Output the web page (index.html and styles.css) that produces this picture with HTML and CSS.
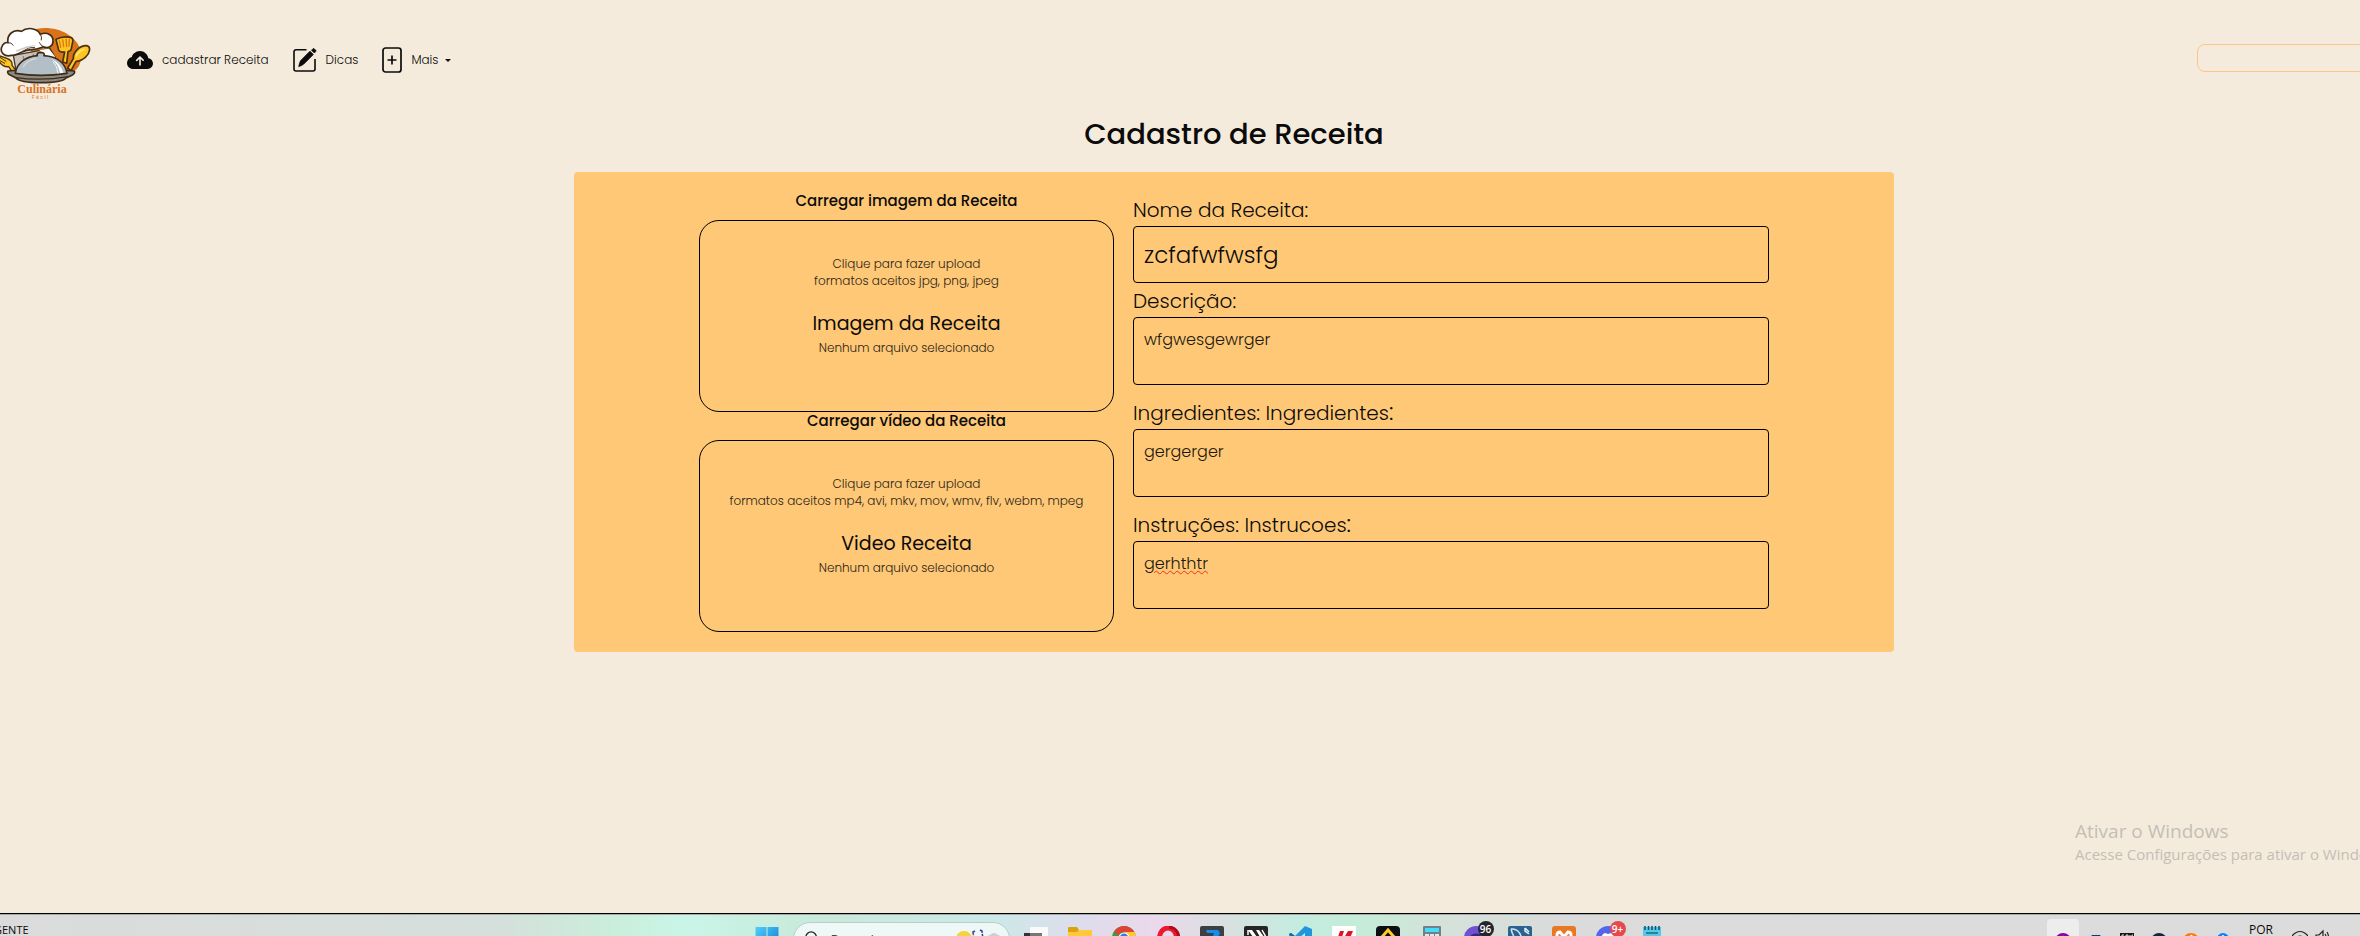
FILE: index.html
```
<!DOCTYPE html>
<html lang="pt-BR">
<head>
<meta charset="utf-8">
<title>Cadastro de Receita</title>
<link rel="stylesheet" href="styles.css">
</head>
<body>
<header class="topbar">
  <a class="logo" href="#" aria-label="Culinária Fácil">
    <svg width="96" height="80" viewBox="0 0 96 80">
      <g transform="translate(0 -4) scale(.33333)" stroke-linejoin="round" stroke-linecap="round">
        <path d="M95 46C118 30 170 34 202 54C238 77 252 110 240 142C235 158 225 165 215 168H90Z" fill="#d87319"/>
        <path d="M40 118L50 175H170L166 125L150 98Z" fill="#c9c3bd" stroke="#4a3720" stroke-width="4"/>
        <path d="M70 122L76 160M100 115V130" stroke="#8b8178" stroke-width="4"/>
        <path d="M118 102Q140 118 146 150H168L164 120L146 98Z" fill="#fff"/>
        <path d="M35 118C12 124 0 108 5 94C8 82 18 78 24 80C20 56 40 38 64 46C82 32 112 36 121 55C142 46 160 58 159 76C159 92 144 98 130 92C112 104 88 96 66 108C52 114 44 118 35 118Z" fill="#fff" stroke="#3f2b16" stroke-width="5"/>
        <path d="M24 80Q34 78 40 88M121 55Q127 62 124 72M130 92Q122 88 118 80M66 108Q86 92 104 94" fill="none" stroke="#4a3720" stroke-width="3"/>
        <path d="M46 104Q80 88 110 86Q90 94 66 101Q50 110 46 104Z" fill="#cfcac5"/>
        <path d="M168 70Q190 59 212 64Q220 66 218 78L214 98Q212 106 204 107L200 142L188 138L194 108Q180 110 176 102Z" fill="#ffc61f" stroke="#4a3010" stroke-width="5"/>
        <path d="M178 74L182 94M188 71L191 92M198 69L200 92M208 70L207 90" stroke="#d8751a" stroke-width="4"/>
        <path d="M203 156L220 128C218 108 240 88 260 89C274 92 270 112 256 124C244 134 232 136 228 136L213 164Z" fill="#ffc61f" stroke="#4a3010" stroke-width="5"/>
        <path d="M229 120Q236 104 252 100" fill="none" stroke="#ffe47a" stroke-width="5"/>
        <path d="M-6 118L12 124L22 128Q38 134 36 148L48 164L40 172L26 152Q10 154 0 140L-6 136Z" fill="#ffc61f" stroke="#4a3010" stroke-width="4"/>
        <path d="M0 124L18 136M0 134L14 142" stroke="#4a3010" stroke-width="3"/>
        <path d="M24 165Q20 172 32 178L48 186Q60 200 122 200Q186 200 198 186L216 178Q228 170 222 165Q122 154 24 165Z" fill="#8c8983" stroke="#3f2b16" stroke-width="5"/>
        <path d="M44 184Q122 196 204 182" fill="none" stroke="#3f2b16" stroke-width="4"/>
        <path d="M46 172C50 142 76 122 112 119Q108 110 122 109Q136 110 132 119C172 122 196 142 201 172Q122 184 46 172Z" fill="#b2bfc6" stroke="#3f2b16" stroke-width="5"/>
        <path d="M152 128Q182 140 190 170L180 172Q176 142 152 128Z" fill="#fff"/>
        <path d="M160 138Q172 150 174 172" fill="none" stroke="#eef3f5" stroke-width="3"/>
        <path d="M70 152Q82 132 108 128" fill="none" stroke="#d2dadd" stroke-width="4"/>
      </g>
      <text class="logo-name" x="42" y="73" text-anchor="middle">Culinária</text>
      <text class="logo-sub" x="40" y="79" text-anchor="middle">F á c i l</text>
    </svg>
  </a>
  <nav class="menu">
    <a class="menu-item" href="#">
      <svg width="26" height="26" viewBox="0 0 16 16" fill="#0b0b0b"><path fill-rule="evenodd" d="M8 2.4a5.5 5.5 0 0 0-3.6 1.4c-.8.6-1.3 1.5-1.4 2.3C1.300 6.500 0 8 0 9.800c0 2.100 1.700 3.700 3.800 3.700h8.900c1.800 0 3.300-1.500 3.300-3.300 0-1.700-1.300-3.100-2.900-3.300C12.800 4.400 10.600 2.400 8 2.400zm2.350 5.450a.5.5 0 0 1-.7.7L8.500 7.400V11a.5.5 0 0 1-1 0V7.400L6.350 8.550a.5.5 0 1 1-.7-.7l2-2a.5.5 0 0 1 .7 0z"/></svg>
      <span>cadastrar Receita</span>
    </a>
    <a class="menu-item" href="#">
      <svg width="24" height="24" viewBox="0 0 24 24" fill="none" stroke="#0b0b0b" stroke-width="1.600"><path d="M13.500 1.800H3A2 2 0 0 0 1 3.800V21a2 2 0 0 0 2 2h17a2 2 0 0 0 2-2V11"/><path d="M17 3.300L20.200 6.500L10.500 16.200Q9.500 17.200 5.800 18.500Q6.600 14.800 7.600 12.800Z" fill="#0b0b0b" stroke-width="1"/><path d="M18.500 2.200L20 .7Q20.700.2 21.400.9L22.700 2.200Q23.300 3 22.700 3.600L21.300 5Z" fill="#0b0b0b" stroke-width=".8"/></svg>
      <span>Dicas</span>
    </a>
    <button class="menu-item" type="button">
      <svg width="20" height="26" viewBox="0 0 20 26" fill="none" stroke="#0b0b0b" stroke-width="1.700"><rect x="1" y="1" width="18" height="24" rx="2.500"/><path d="M10 9.200V16.800M6.200 13H13.800" stroke-linecap="round"/></svg>
      <span>Mais</span><i class="caret"></i>
    </button>
  </nav>
  <input class="search" type="search" aria-label="Pesquisar">
</header>

<main class="page">
  <h1>Cadastro de Receita</h1>
  <form class="panel">
    <section class="uploads">
      <h2>Carregar imagem da Receita</h2>
      <label class="drop"><input class="file" type="file" accept=".jpg,.png,.jpeg">
        <span>Clique para fazer upload</span><span>formatos aceitos jpg, png, jpeg</span>
        <strong>Imagem da Receita</strong><span>Nenhum arquivo selecionado</span></label>
      <h2>Carregar vídeo da Receita</h2>
      <label class="drop"><input class="file" type="file" accept="video/*">
        <span>Clique para fazer upload</span><span>formatos aceitos mp4, avi, mkv, mov, wmv, flv, webm, mpeg</span>
        <strong>Video Receita</strong><span>Nenhum arquivo selecionado</span></label>
    </section>
    <section class="fields">
      <label for="nome">Nome da Receita:</label>
      <input class="control name" id="nome" type="text" value="zcfafwfwsfg">
      <label for="descricao">Descrição:</label>
      <textarea class="control" id="descricao" spellcheck="false">wfgwesgewrger</textarea>
      <label for="ingredientes">Ingredientes: Ingredientes<b>:</b></label>
      <textarea class="control" id="ingredientes" spellcheck="false">gergerger</textarea>
      <label for="instrucoes">Instruções: Instrucoes<b>:</b></label>
      <textarea class="control misspelt" id="instrucoes" spellcheck="false">gerhthtr</textarea>
    </section>
  </form>
</main>

<aside class="activate"><p class="activate-title">Ativar o Windows</p><p>Acesse Configurações para ativar o Windows.</p></aside>

<footer class="taskbar">
  <span class="news">GENTE</span>
  <div class="apps">
    <button class="app" type="button" aria-label="Iniciar"><svg viewBox="0 0 24 24"><defs><linearGradient id="w" x2="1" y2="1"><stop stop-color="#4fd0fb"/><stop offset="1" stop-color="#0a76d0"/></linearGradient></defs><path d="M.5 1H11.500V12H.5ZM12.500 1H23.500V12H12.500ZM.5 13H11.500V24H.5ZM12.500 13H23.500V24H12.500Z" fill="url(#w)"/></svg></button>
    <label class="find"><svg class="lens" viewBox="0 0 16 16" fill="none" stroke="#222" stroke-width="1.500"><circle cx="7" cy="7" r="6"/><path d="M11.500 11.500L15 15"/></svg><input type="text" placeholder="Pesquisar" aria-label="Pesquisar no Windows"><svg class="art" viewBox="0 0 48 24"><circle cx="9" cy="11" r="8" fill="#f6d338"/><path d="M20 3l-2 1 1 9 5 3 4-4-1-9-2-1" fill="none" stroke="#46408f" stroke-width="1.600" stroke-dasharray="5 1"/><path d="M30 16Q29 8 35 7Q39 3 43 7Q48 8 47 18H30Z" fill="#d0cbdc"/></svg></label>
    <button class="app" type="button" aria-label="Visão de tarefas"><svg viewBox="0 0 24 24"><rect x="6" y="1" width="18" height="16" fill="#fafafa"/><rect x="0" y="7" width="18" height="16" fill="#777"/><path d="M0 7H6V23H0Z" fill="#333"/></svg></button>
    <button class="app" type="button" aria-label="Explorador"><svg viewBox="0 0 24 24"><path d="M0 2Q0 1 1 1H9L11 4H24V10H0Z" fill="#dca20f"/><path d="M0 6H9L11 4H24V22H0Z" fill="#ffc938"/></svg></button>
    <button class="app" type="button" aria-label="Chrome"><svg viewBox="0 0 24 24"><circle cx="12" cy="12" r="12" fill="#2ba24c"/><path d="M2 5.500A12 12 0 0 1 22.500 6H12A6 6 0 0 0 6.500 10Z" fill="#de4335"/><path d="M12 6H22.500A12 12 0 0 1 12 24L17 14Z" fill="#fdca2e"/><circle cx="12" cy="12" r="5.500" fill="#fff"/><circle cx="12" cy="12" r="4.400" fill="#3979e6"/></svg></button>
    <button class="app" type="button" aria-label="Opera"><svg viewBox="0 0 24 24"><ellipse cx="12" cy="12" rx="8.500" ry="10" fill="none" stroke="#ee1830" stroke-width="5"/><path d="M13 1Q22 2 23 12" fill="none" stroke="#ac0d18" stroke-width="3"/></svg></button>
    <button class="app" type="button" aria-label="Editor"><svg viewBox="0 0 24 24"><rect width="24" height="24" rx="2" fill="#3d3f42"/><path d="M6 4H18L20 7L17 13H4L6 10H13L14 7H7Z" fill="#148fef"/></svg></button>
    <button class="app" type="button" aria-label="CapCut"><svg viewBox="0 0 24 24"><rect width="24" height="24" rx="2" fill="#252525"/><path d="M4 4H8L13 11H9ZM12 4H15L20 11H16Z" fill="#fff"/><path d="M4 9V4M18 4L22 11" stroke="#fff" stroke-width="1.500"/></svg></button>
    <button class="app" type="button" aria-label="VS Code"><svg viewBox="0 0 24 24"><path d="M17 0L24 3V21L17 24L7 14L3 17L1 15V8L3 7L7 10Z" fill="#2196dc"/><path d="M17 7V17L11 12Z" fill="#d2ebe2"/><path d="M1 8L3 7L20 20L17 24Z" fill="#0869ad"/></svg></button>
    <button class="app" type="button" aria-label="Apresentações"><svg viewBox="0 0 24 24"><path fill="#fff" d="M0 0H24V24H0Z"/><path d="M8 5H12L9 14H5ZM16 5H21L18 12H21L17 17L12 12Z" fill="#db1524"/></svg></button>
    <button class="app" type="button" aria-label="Aplicativo"><svg viewBox="0 0 24 24"><rect width="24" height="24" rx="4" fill="#0b0f12"/><path d="M12 4L18 11L12 17L6 11Z" fill="none" stroke="#ffc928" stroke-width="3"/></svg></button>
    <button class="app" type="button" aria-label="Calculadora"><svg viewBox="0 0 24 24"><rect x="3" width="18" height="24" rx="1" fill="#73808b"/><path d="M5 2H19V6H5Z" fill="#43ddfa"/><path d="M5 8H9V11H5ZM10 8H14V11H10ZM15 8H19V11H15Z" fill="#e3e8ec"/></svg></button>
    <button class="app" type="button" aria-label="Mensagens"><svg viewBox="0 0 24 24"><circle cx="12" cy="12" r="12" fill="#7051d1"/><path d="M6 14Q8 7 17 10" fill="none" stroke="#35297b" stroke-width="3"/></svg><span class="badge">96</span></button>
    <button class="app" type="button" aria-label="MySQL Workbench"><svg viewBox="0 0 24 24"><rect width="24" height="24" rx="2" fill="#296490"/><path d="M3 3Q10 2 13 10L18 15M3 3Q5 11 10 16" fill="none" stroke="#d2e3ef" stroke-width="1.500"/><path d="M17 2L21 6M17 2V5L21 8" fill="none" stroke="#e7eff5" stroke-width="1.500"/></svg></button>
    <button class="app" type="button" aria-label="XAMPP"><svg viewBox="0 0 24 24"><rect width="24" height="24" rx="3" fill="#e97825"/><path d="M5 16V9Q5 6 8 6L12 11L16 6Q19 6 19 9V16" fill="none" stroke="#fff" stroke-width="3"/></svg></button>
    <button class="app" type="button" aria-label="Discord"><svg viewBox="0 0 24 24"><circle cx="12" cy="12" r="12" fill="#5466ee"/><path d="M5 15Q5 8 9 7L12 8L15 7Q19 8 19 15Z" fill="#fff"/></svg><span class="badge red">9+</span></button>
    <button class="app" type="button" aria-label="Bloco de notas"><svg viewBox="0 0 24 24"><rect x="3" y="1" width="18" height="23" fill="#55c9e7"/><path d="M5 0V4M8.500 0V4M12 0V4M15.500 0V4M19 0V4" stroke="#14506b" stroke-width="1.500"/><path d="M6 7H18" stroke="#166b88" stroke-width="1.500"/></svg></button>
  </div>
  <div class="tray">
    <button class="mini" type="button" aria-label="Mostrar ícones ocultos"><svg viewBox="0 0 16 16"><path d="M3 10L8 5L13 10" fill="none" stroke="#222" stroke-width="1.500"/></svg></button>
    <button class="mini lit" type="button" aria-label="Bandeja 1"><svg viewBox="0 0 16 16"><circle cx="8" cy="8" r="8" fill="#8406a0"/><path d="M5 4L6 9L8 4L10 9L11 4" fill="none" stroke="#ff7c27" stroke-width="1.500"/></svg></button>
    <button class="mini" type="button" aria-label="Bandeja 2"><svg viewBox="0 0 16 16"><path d="M5 2H13L15 5V14H2V6Z" fill="#073f73"/><path d="M6 5H11L7 12" stroke="#fff" fill="none"/></svg></button>
    <button class="mini" type="button" aria-label="Epic Games"><svg viewBox="0 0 16 16"><path d="M1 0H15V14L8 16L1 14Z" fill="#171717"/><path d="M3 2V6H5M3 4H5M3 2H5M7 6V2H9V4M11 2V6M14 2H13V6" stroke="#eee" fill="none"/></svg></button>
    <button class="mini" type="button" aria-label="Steam"><svg viewBox="0 0 16 16"><circle cx="8" cy="8" r="8" fill="#172440"/><circle cx="10.500" cy="6" r="2.500" fill="none" stroke="#fff"/></svg></button>
    <button class="mini" type="button" aria-label="Avast"><svg viewBox="0 0 16 16"><circle cx="8" cy="8" r="8" fill="#ff7800"/><path d="M7 2Q10 1 11 6L13 10L4 12Q6 6 9 6Z" fill="#fff"/></svg></button>
    <button class="mini" type="button" aria-label="Áudio"><svg viewBox="0 0 16 16"><rect x="2" width="12" height="16" rx="6" fill="#0a82ff"/><path d="M5 5V9M8 2V9L11 6L8 4" stroke="#fff" fill="none" stroke-width="1.500"/></svg></button>
    <span class="lang">POR</span>
    <svg class="sys" viewBox="0 0 16 16" fill="none" stroke="#222" stroke-width="1.200"><path d="M0 7Q8-2 16 7M3 10Q8 4 13 10"/></svg>
    <svg class="sys" viewBox="0 0 16 16" fill="none" stroke="#222" stroke-width="1.200"><path d="M1 6H4L8 2V14L4 10H1ZM10 5Q12 8 10 11M12 3Q15 8 12 13"/></svg>
  </div>
</footer>
</body>
</html>
```
FILE: styles.css
```
* { box-sizing: border-box; }
body {
  margin: 0;
  min-height: 100vh;
  display: flex;
  flex-direction: column;
  overflow: hidden;
  background: #f5ebdc;
  color: #0b0b0b;
  font-family: Poppins, Inter, "Open Sans", sans-serif;
}
h1, h2, p { margin: 0; }
button { border: 0; padding: 0; background: none; font: inherit; color: inherit; }

.topbar { display: flex; align-items: center; padding: 20px 0 13px; }
.logo { display: block; height: 80px; }
.logo svg { display: block; }
.logo-name { font: bold 12px "Liberation Serif", serif; fill: #d9731f; }
.logo-sub { font: 5px Inter, sans-serif; fill: #d9731f; }
.menu { display: flex; align-items: center; gap: 24px; margin-left: 31px; font-size: 12px; font-weight: 300; }
.menu-item { display: flex; align-items: center; gap: 9px; color: #0b0b0b; text-decoration: none; }
.caret { border: 3px solid transparent; border-top-color: #0b0b0b; border-bottom: 0; margin-left: -2px; }
.search {
  flex: 0 0 220px;
  align-self: flex-start;
  height: 28px;
  margin: 24px -57px 0 auto;
  border: 1px solid #ffc48a;
  border-radius: 8px;
  background: transparent;
  appearance: none;
}

.page { padding-left: 108px; }
h1 { padding-top: 1px; font-size: 29px; line-height: 40px; font-weight: 500; text-align: center; }
.panel {
  display: grid;
  grid-template-columns: minmax(0, 415px) minmax(0, 1fr);
  gap: 19px;
  max-width: 1320px;
  margin: 18px auto 0;
  padding: 20px 125px;
  border-radius: 4px;
  background: #ffc876;
}
.uploads h2 { font-size: 15px; line-height: 18px; font-weight: 500; text-align: center; margin-bottom: 10px; }
.drop {
  display: flex;
  flex-direction: column;
  align-items: center;
  height: 192px;
  padding-top: 34px;
  border: 1px solid #000;
  border-radius: 20px;
  font-size: 12px;
  line-height: 17px;
  font-weight: 300;
  color: #2b2417;
}
.drop strong { margin-top: 20px; font-size: 19px; line-height: 30px; font-weight: 400; color: #0b0b0b; }
.file { position: absolute; width: 1px; height: 1px; opacity: 0; }

.fields { display: flex; flex-direction: column; padding-top: 6px; }
.fields label { font-size: 20px; line-height: 24px; font-weight: 300; margin-bottom: 4px; }
.fields b { font-size: 24px; line-height: 20px; font-weight: 300; }
.control {
  display: block;
  width: 100%;
  height: 68px;
  margin: 0 0 16px;
  padding: 10px;
  border: 1px solid #000;
  border-radius: 4px;
  background: transparent;
  color: #1c1810;
  font: 300 16px/24px Poppins, Inter, "Open Sans", sans-serif;
  resize: none;
}
.name { height: 57px; margin-bottom: 6px; font-size: 23px; color: #0b0b0b; }
.misspelt { margin-bottom: 0; text-decoration: underline wavy #ff2a1a 1px; }

.activate {
  margin-top: auto;
  padding: 0 0 48px;
  padding-left: calc(100% - 285px);
  font: 15px/22px "Open Sans", sans-serif;
  color: #c3beb6;
  white-space: nowrap;
}
.activate-title { font-size: 19px; line-height: 24px; }

.taskbar {
  display: grid;
  grid-template-columns: 1fr auto 1fr;
  height: 23px;
  padding-left: 58px;
  overflow: hidden;
  border-top: 1px solid #000;
  box-shadow: inset 0 1px #a3aaa9;
  background: linear-gradient(90deg, #dbdbdb 0, #d5dfdb 21%, #caeedb 26%, #c9f5e8 29%, #c8ebdb 34%, #cbe9e8 42%, #dfdcec 46%, #ead9ea 49%, #d8e0e0 52%, #c4ecdf 55%, #c5ecd8 58%, #d4e2da 61%, #dadbda 66%, #dcdcdc 100%);
}
.news { margin-left: -60px; padding-top: 8px; font: 11px/16px "Open Sans", sans-serif; text-indent: -4px; }
.apps, .tray { display: flex; align-items: flex-start; }
.app { position: relative; width: 44px; padding-top: 12px; }
.app svg { display: block; width: 24px; height: 24px; margin: 0 auto; }
.badge {
  position: absolute;
  left: 24px;
  top: 7px;
  min-width: 16px;
  height: 16px;
  border-radius: 8px;
  background: #24262c;
  color: #fff;
  font: 600 10px/16px "Open Sans", sans-serif;
  text-align: center;
}
.badge.red { background: #e5484d; }
.find {
  display: flex;
  width: 217px;
  height: 34px;
  margin: 8px 4px 0;
  padding: 8px 6px 0 11px;
  border: 1px solid #b7cfc8;
  border-radius: 17px;
  background: #eef8f6;
}
.find input { flex: 1; min-width: 0; height: 18px; padding: 0 0 0 12px; border: 0; background: none; font: 14px/18px "Open Sans", sans-serif; }
.find input::placeholder { color: #444; }
.lens { width: 14px; height: 14px; }
.art { width: 48px; height: 24px; margin-top: -3px; }
.tray { justify-content: flex-end; padding-right: 29px; }
.mini { width: 32px; height: 34px; padding-top: 10px; margin-top: 5px; }
.mini svg { display: block; width: 16px; height: 16px; margin: 0 auto; }
.lit { border-radius: 4px; background: #ededed; }
.lang { margin: 8px 12px 0 10px; font: 12px/16px "Open Sans", sans-serif; }
.sys { width: 16px; height: 16px; margin: 15px 0 0 7px; }
```
